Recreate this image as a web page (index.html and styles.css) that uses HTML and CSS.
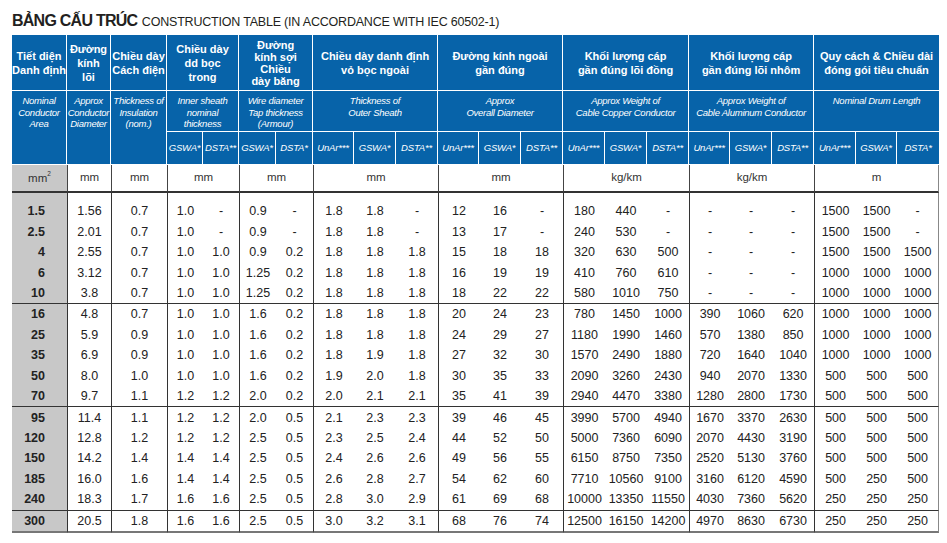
FILE: index.html
```html
<!DOCTYPE html>
<html lang="vi">
<head>
<meta charset="utf-8">
<title>Bảng cấu trúc</title>
<link rel="stylesheet" href="styles.css">
</head>
<body>
<div class="title"><span class="title-vi">BẢNG CẤU TRÚC</span> <span class="title-en">CONSTRUCTION TABLE (IN ACCORDANCE WITH IEC 60502-1)</span></div>
<table class="spec">
<colgroup>
<col class="w55"><col class="w44"><col class="w56">
<col class="w36"><col class="w36">
<col class="w37"><col class="w37">
<col class="w41"><col class="w42"><col class="w42">
<col class="w41"><col class="w42"><col class="w42">
<col class="w42"><col class="w42"><col class="w42">
<col class="w41"><col class="w42"><col class="w42">
<col class="w42"><col class="w41"><col class="w42">
</colgroup>
<thead>
<tr class="h1">
<th>Tiết diện<br>Danh định</th>
<th>Đường<br>kính<br>lõi</th>
<th>Chiều dày<br>Cách điện</th>
<th colspan="2">Chiều dày<br>dd bọc<br>trong</th>
<th colspan="2" class="tight">Đường<br>kính sợi<br>Chiều<br>dày băng</th>
<th colspan="3">Chiều dày danh định<br>vỏ bọc ngoài</th>
<th colspan="3">Đường kính ngoài<br>gần đúng</th>
<th colspan="3">Khối lượng cáp<br>gần đúng lõi đồng</th>
<th colspan="3">Khối lượng cáp<br>gần đúng lõi nhôm</th>
<th colspan="3">Quy cách &amp; Chiều dài<br>đóng gói tiêu chuẩn</th>
</tr>
<tr class="h2">
<th rowspan="2" class="en">Nominal<br>Conductor<br>Area</th>
<th rowspan="2" class="en">Approx<br>Conductor<br>Diameter</th>
<th rowspan="2" class="en">Thickness of<br>Insulation<br>(nom.)</th>
<th colspan="2" class="en">Inner sheath<br>nominal<br>thickness</th>
<th colspan="2" class="en">Wire diameter<br>Tap thickness<br>(Armour)</th>
<th colspan="3" class="en">Thickness of<br>Outer Sheath</th>
<th colspan="3" class="en">Approx<br>Overall Diameter</th>
<th colspan="3" class="en">Approx Weight of<br>Cable Copper Conductor</th>
<th colspan="3" class="en">Approx Weight of<br>Cable Aluminum Conductor</th>
<th colspan="3" class="en">Nominal Drum Length</th>
</tr>
<tr class="h3">
<th class="sub">GSWA*</th><th class="sub">DSTA**</th>
<th class="sub">GSWA*</th><th class="sub">DSTA*</th>
<th class="sub">UnAr***</th><th class="sub">GSWA*</th><th class="sub">DSTA**</th>
<th class="sub">UnAr***</th><th class="sub">GSWA*</th><th class="sub">DSTA**</th>
<th class="sub">UnAr***</th><th class="sub">GSWA*</th><th class="sub">DSTA**</th>
<th class="sub">UnAr***</th><th class="sub">GSWA*</th><th class="sub">DSTA**</th>
<th class="sub">UnAr***</th><th class="sub">GSWA*</th><th class="sub">DSTA*</th>
</tr>
<tr class="units">
<td class="key">mm<sup>2</sup></td>
<td class="sep">mm</td>
<td class="sep">mm</td>
<td colspan="2" class="sep">mm</td>
<td colspan="2" class="sep">mm</td>
<td colspan="3" class="sep">mm</td>
<td colspan="3" class="sep">mm</td>
<td colspan="3" class="sep">kg/km</td>
<td colspan="3" class="sep">kg/km</td>
<td colspan="3" class="sep last">m</td>
</tr>
</thead>
<tbody>
<tr class="first"><td>1.5</td><td>1.56</td><td>0.7</td><td>1.0</td><td>-</td><td>0.9</td><td>-</td><td>1.8</td><td>1.8</td><td>-</td><td>12</td><td>16</td><td>-</td><td>180</td><td>440</td><td>-</td><td>-</td><td>-</td><td>-</td><td>1500</td><td>1500</td><td>-</td></tr>
<tr><td>2.5</td><td>2.01</td><td>0.7</td><td>1.0</td><td>-</td><td>0.9</td><td>-</td><td>1.8</td><td>1.8</td><td>-</td><td>13</td><td>17</td><td>-</td><td>240</td><td>530</td><td>-</td><td>-</td><td>-</td><td>-</td><td>1500</td><td>1500</td><td>-</td></tr>
<tr><td>4</td><td>2.55</td><td>0.7</td><td>1.0</td><td>1.0</td><td>0.9</td><td>0.2</td><td>1.8</td><td>1.8</td><td>1.8</td><td>15</td><td>18</td><td>18</td><td>320</td><td>630</td><td>500</td><td>-</td><td>-</td><td>-</td><td>1500</td><td>1500</td><td>1500</td></tr>
<tr><td>6</td><td>3.12</td><td>0.7</td><td>1.0</td><td>1.0</td><td>1.25</td><td>0.2</td><td>1.8</td><td>1.8</td><td>1.8</td><td>16</td><td>19</td><td>19</td><td>410</td><td>760</td><td>610</td><td>-</td><td>-</td><td>-</td><td>1000</td><td>1000</td><td>1000</td></tr>
<tr><td>10</td><td>3.8</td><td>0.7</td><td>1.0</td><td>1.0</td><td>1.25</td><td>0.2</td><td>1.8</td><td>1.8</td><td>1.8</td><td>18</td><td>22</td><td>22</td><td>580</td><td>1010</td><td>750</td><td>-</td><td>-</td><td>-</td><td>1000</td><td>1000</td><td>1000</td></tr>
<tr class="grp"><td>16</td><td>4.8</td><td>0.7</td><td>1.0</td><td>1.0</td><td>1.6</td><td>0.2</td><td>1.8</td><td>1.8</td><td>1.8</td><td>20</td><td>24</td><td>23</td><td>780</td><td>1450</td><td>1000</td><td>390</td><td>1060</td><td>620</td><td>1000</td><td>1000</td><td>1000</td></tr>
<tr><td>25</td><td>5.9</td><td>0.9</td><td>1.0</td><td>1.0</td><td>1.6</td><td>0.2</td><td>1.8</td><td>1.8</td><td>1.8</td><td>24</td><td>29</td><td>27</td><td>1180</td><td>1990</td><td>1460</td><td>570</td><td>1380</td><td>850</td><td>1000</td><td>1000</td><td>1000</td></tr>
<tr><td>35</td><td>6.9</td><td>0.9</td><td>1.0</td><td>1.0</td><td>1.6</td><td>0.2</td><td>1.8</td><td>1.9</td><td>1.8</td><td>27</td><td>32</td><td>30</td><td>1570</td><td>2490</td><td>1880</td><td>720</td><td>1640</td><td>1040</td><td>1000</td><td>1000</td><td>1000</td></tr>
<tr><td>50</td><td>8.0</td><td>1.0</td><td>1.0</td><td>1.0</td><td>1.6</td><td>0.2</td><td>1.9</td><td>2.0</td><td>1.8</td><td>30</td><td>35</td><td>33</td><td>2090</td><td>3260</td><td>2430</td><td>940</td><td>2070</td><td>1330</td><td>500</td><td>500</td><td>500</td></tr>
<tr><td>70</td><td>9.7</td><td>1.1</td><td>1.2</td><td>1.2</td><td>2.0</td><td>0.2</td><td>2.0</td><td>2.1</td><td>2.1</td><td>35</td><td>41</td><td>39</td><td>2940</td><td>4470</td><td>3380</td><td>1280</td><td>2800</td><td>1730</td><td>500</td><td>500</td><td>500</td></tr>
<tr class="grp"><td>95</td><td>11.4</td><td>1.1</td><td>1.2</td><td>1.2</td><td>2.0</td><td>0.5</td><td>2.1</td><td>2.3</td><td>2.3</td><td>39</td><td>46</td><td>45</td><td>3990</td><td>5700</td><td>4940</td><td>1670</td><td>3370</td><td>2630</td><td>500</td><td>500</td><td>500</td></tr>
<tr><td>120</td><td>12.8</td><td>1.2</td><td>1.2</td><td>1.2</td><td>2.5</td><td>0.5</td><td>2.3</td><td>2.5</td><td>2.4</td><td>44</td><td>52</td><td>50</td><td>5000</td><td>7360</td><td>6090</td><td>2070</td><td>4430</td><td>3190</td><td>500</td><td>500</td><td>500</td></tr>
<tr><td>150</td><td>14.2</td><td>1.4</td><td>1.4</td><td>1.4</td><td>2.5</td><td>0.5</td><td>2.4</td><td>2.6</td><td>2.6</td><td>49</td><td>56</td><td>55</td><td>6150</td><td>8750</td><td>7350</td><td>2520</td><td>5130</td><td>3760</td><td>500</td><td>500</td><td>500</td></tr>
<tr><td>185</td><td>16.0</td><td>1.6</td><td>1.4</td><td>1.4</td><td>2.5</td><td>0.5</td><td>2.6</td><td>2.8</td><td>2.7</td><td>54</td><td>62</td><td>60</td><td>7710</td><td>10560</td><td>9100</td><td>3160</td><td>6120</td><td>4590</td><td>500</td><td>250</td><td>500</td></tr>
<tr><td>240</td><td>18.3</td><td>1.7</td><td>1.6</td><td>1.6</td><td>2.5</td><td>0.5</td><td>2.8</td><td>3.0</td><td>2.9</td><td>61</td><td>69</td><td>68</td><td>10000</td><td>13350</td><td>11550</td><td>4030</td><td>7360</td><td>5620</td><td>250</td><td>250</td><td>250</td></tr>
<tr class="grp lastrow"><td>300</td><td>20.5</td><td>1.8</td><td>1.6</td><td>1.6</td><td>2.5</td><td>0.5</td><td>3.0</td><td>3.2</td><td>3.1</td><td>68</td><td>76</td><td>74</td><td>12500</td><td>16150</td><td>14200</td><td>4970</td><td>8630</td><td>6730</td><td>250</td><td>250</td><td>250</td></tr>
</tbody>
</table>
</body>
</html>
```
FILE: styles.css
```css
html, body {
  margin: 0;
  background: #ffffff;
}
body {
  padding: 0 8px 0 12px;
  font-family: "Liberation Sans", Arial, sans-serif;
  color: #222;
}
.title {
  height: 35px;
  box-sizing: border-box;
  padding-top: 12px;
  line-height: 18px;
  white-space: nowrap;
  color: #231f20;
}
.title-vi {
  font-weight: bold;
  font-size: 16px;
  letter-spacing: -0.75px;
}
.title-en {
  font-size: 12.5px;
  letter-spacing: -0.2px;
}
.spec {
  width: 927px;
  table-layout: fixed;
  border-collapse: separate;
  border-spacing: 0;
}
.w55 { width: 55px; }
.w44 { width: 44px; }
.w56 { width: 56px; }
.w36 { width: 36px; }
.w37 { width: 37px; }
.w41 { width: 41px; }
.w42 { width: 42px; }

.spec th {
  background: #0763a9;
  color: #ffffff;
  border-right: 1px solid #ffffff;
  border-bottom: 1px solid #ffffff;
  padding: 0;
  text-align: center;
  vertical-align: middle;
  font-weight: bold;
  font-size: 11px;
  line-height: 14px;
  white-space: nowrap;
}
.spec tr > th:last-child { border-right: 0; }
.h1 { height: 56px; }
.h2 { height: 41px; }
.h3 { height: 33px; }
.spec th.tight { line-height: 12px; }
.spec th.en {
  font-weight: normal;
  font-style: italic;
  font-size: 9.5px;
  letter-spacing: -0.25px;
  line-height: 11.5px;
  vertical-align: top;
  padding-top: 4px;
}
.spec th.sub {
  font-weight: normal;
  font-style: italic;
  font-size: 9.5px;
  letter-spacing: -0.2px;
}

.units { height: 28px; }
.units td {
  text-align: center;
  vertical-align: middle;
  font-size: 11.5px;
  color: #333;
  padding: 0 0 2px;
  border-bottom: 2px solid #333;
}
.units td.key { background: #c8c8c8; }
.units td.key sup { font-size: 6.5px; vertical-align: 6px; }
.units td.sep { border-left: 1px solid #444; }
.units td.last { border-right: 1px solid #888; }

.spec tbody td {
  height: 20.45px;
  padding: 0;
  text-align: center;
  vertical-align: middle;
  font-size: 12.5px;
  color: #222;
  white-space: nowrap;
}
.spec tbody td:first-child {
  background: #c8c8c8;
  text-align: right;
  padding-right: 22px;
  font-weight: bold;
}
.spec tbody td:nth-child(2),
.spec tbody td:nth-child(3),
.spec tbody td:nth-child(4),
.spec tbody td:nth-child(6),
.spec tbody td:nth-child(8),
.spec tbody td:nth-child(11),
.spec tbody td:nth-child(14),
.spec tbody td:nth-child(17),
.spec tbody td:nth-child(20) {
  border-left: 1px solid #333;
}
.spec tbody td:last-child { border-right: 1px solid #888; }
.spec tbody tr.first td { padding-top: 8px; }
.spec tbody tr.grp td { border-top: 1.5px solid #333; }
.spec tbody tr.lastrow td { border-bottom: 2px solid #777; }
```
